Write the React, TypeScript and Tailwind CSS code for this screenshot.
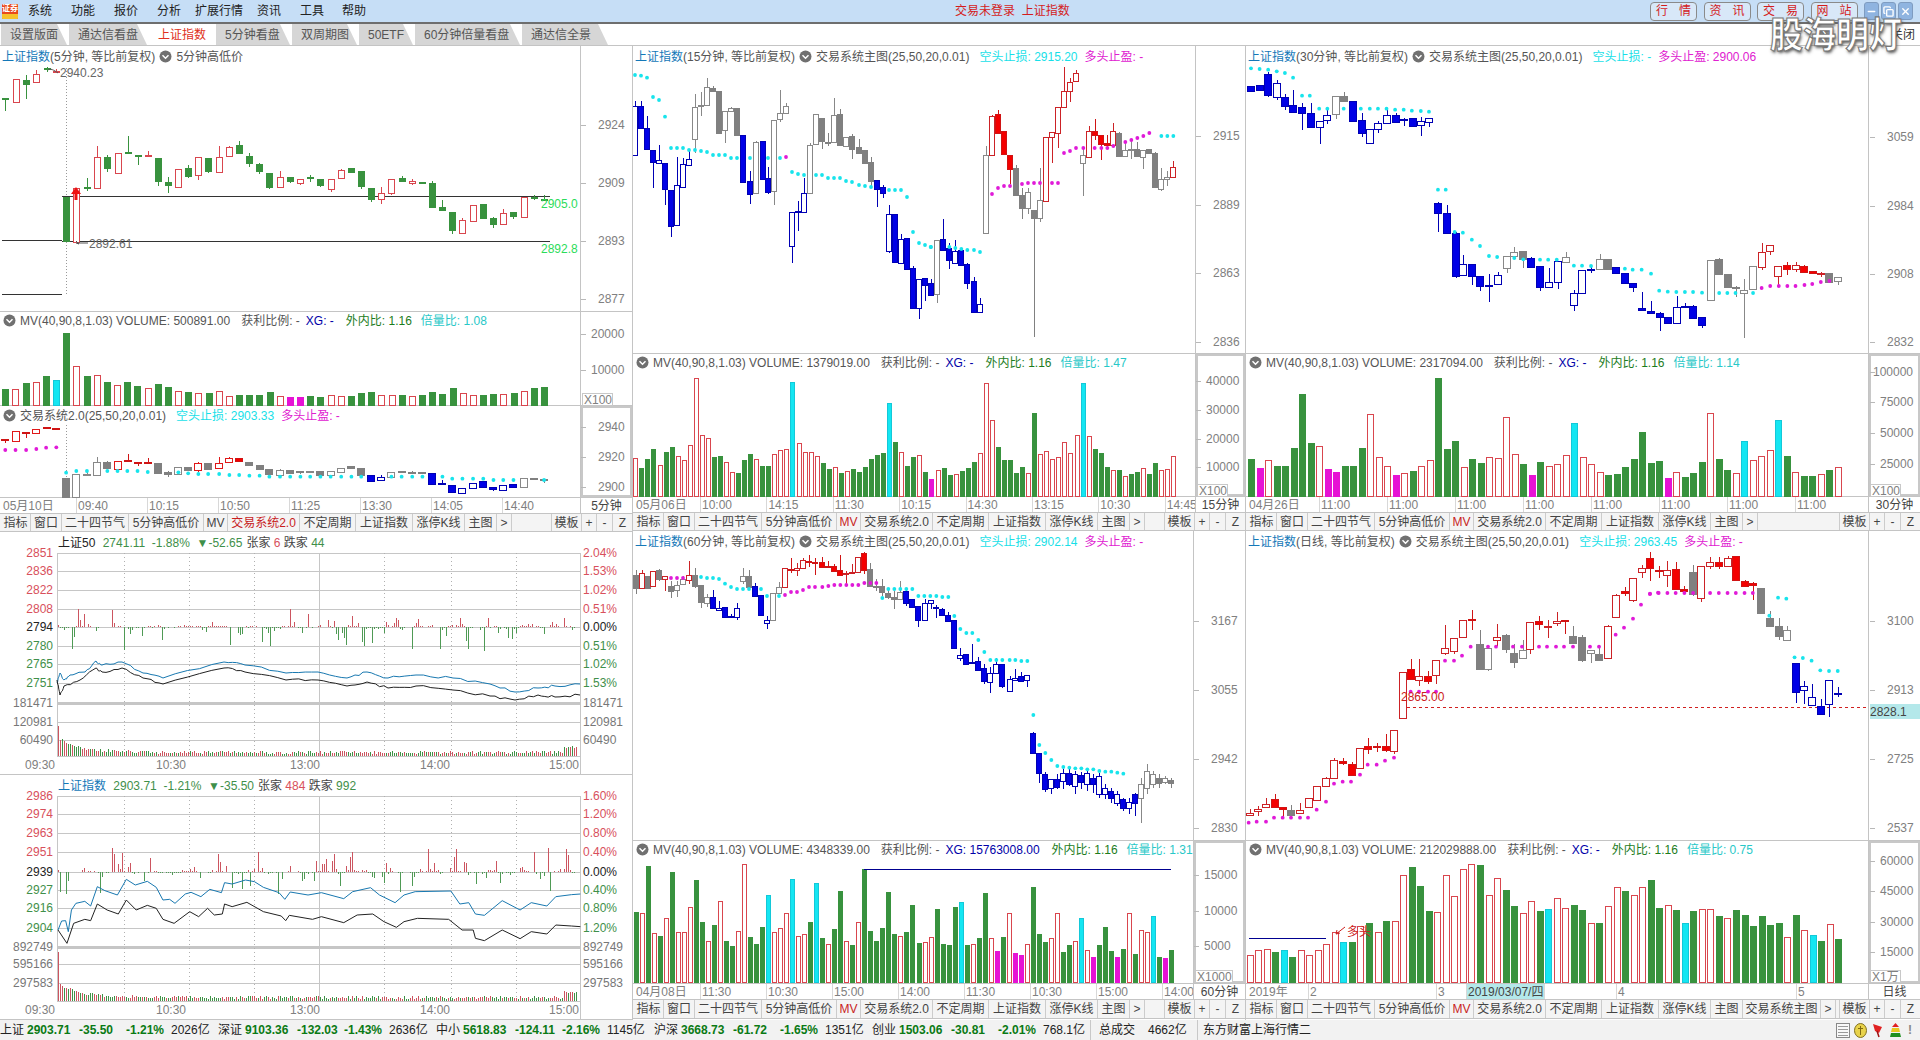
import React from "react";
import { Copy, Minus, X } from "lucide-react";

type Zoom = [number, number, number, number];

const Z1: Zoom = [0, 0, 2.45, 3];
const Z2: Zoom = [1280, 0, 2.45, 3];
const Z3: Zoom = [0, 340, 2.45, 3];
const Z5: Zoom = [600, 340, 2.376, 3];
const Z6: Zoom = [1200, 340, 2.178, 3];
const Z7: Zoom = [620, 820, 2.376, 3];
const Z8: Zoom = [1240, 820, 2.306, 3];
const Z9: Zoom = [633, 46, 3, 3];
const Z10: Zoom = [930, 46, 3, 3];
const Z11: Zoom = [633, 532, 3, 3];
const Z12: Zoom = [1246, 532, 3, 3];

// x top bottom [high low] kind
const C5M = `13 293 296 293 332 g;38 238 305 r;64 240 252 225 297 g;89 222 247 210 247 r;114 205 208 200 215 g;137 213 215 208 220 r;162 590 722 g;187 565 725 r;213 560 562 533 572 g;238 472 565 438 565 r;263 472 505 465 515 g;288 460 518 460 522 r;313 456 460 408 462 g;337 465 467 465 495 g;362 466 469 452 472 r;388 474 542 474 557 g;412 546 556 532 578 g;437 508 560 r;461 505 527 495 535 g;486 472 526 472 540 r;510 475 512 475 518 g;537 470 515 438 518 r;562 442 467 438 472 r;586 436 458 424 458 g;611 468 488 460 500 g;635 492 512 488 522 g;660 519 561 519 567 g;686 532 562 513 562 r;711 530 542 530 548 g;736 536 548 536 556 r;760 532 534 525 545 g;785 538 555 538 560 g;810 538 566 538 575 r;836 510 533 508 538 r;861 503 515 503 519 g;885 514 558 514 566 g;910 565 598 565 605 g;934 580 598 562 611 r;959 538 578 538 585 r;984 535 542 528 545 g;1010 543 548 538 554 r;1035 545 546 545 553 g;1059 549 621 544 623 g;1084 622 630 600 632 g;1108 636 689 636 701 g;1133 660 700 655 700 r;1159 614 662 614 664 r;1184 613 654 613 658 g;1209 655 671 650 684 g;1233 640 673 628 675 r;1258 637 648 635 656 g;1283 591 652 590 652 r;1309 590 591 585 600 g;1333 596 598 585 603 g`;

const C5S = `13 296 300 296 310 R;38 273 302 r;64 275 280 275 295 R;89 267 278 r;114 262 264 R;138 265 266 R;162 415 470 k;187 403 472 K;213 401 403 393 405 K;238 367 405 352 405 K;263 367 383 363 385 k;288 364 388 362 390 r;313 359 363 342 365 R;337 367 370 367 378 R;362 365 368 355 370 R;388 369 398 369 400 k;412 396 403 392 410 k;437 382 403 K;461 381 391 k;486 368 391 366 395 r;510 370 386 k;537 368 385 352 386 r;562 355 366 352 368 r;586 353 364 R;611 367 376 k;636 375 386 k;660 387 403 k;686 391 406 386 410 K;711 391 398 k;736 394 396 392 402 k;760 393 395 K;785 394 404 k;810 394 406 K;836 385 396 383 400 K;861 378 385 k;885 385 404 k;910 406 422 b;934 412 419 405 422 B;959 395 412 K;984 393 397 k;1010 396 398 393 402 k;1035 397 398 k;1059 400 431 b;1084 429 433 420 433 b;1108 435 457 b;1133 445 459 B;1159 428 444 B;1184 424 442 b;1209 441 448 441 452 b;1233 435 450 B;1258 432 440 b;1283 415 442 K;1309 415 418 k;1333 418 421 418 428 k`;

const C15A = `6 180 328 165 328 B;25 180 245 165 245 b;43 247 308 210 308 b;61 312 348 312 425 b;79 343 350 296 350 B;97 351 428 351 476 b;115 432 540 432 572 b;133 418 536 334 536 B;151 355 422 335 425 B;169 340 358 316 358 B;187 184 278 144 320 K;205 178 179 138 210 K;223 124 178 97 178 K;241 126 134 120 134 k;259 135 260 135 262 k;277 195 253 195 290 K;295 187 195 182 195 K;313 186 266 k;331 267 407 b;351 405 443 375 473 b;370 288 440 285 442 K;389 285 398 b;405 396 437 363 445 b;424 222 436 222 476 K;442 202 220 132 228 K;460 181 202 172 202 K;478 499 601 499 650 B;496 496 498 465 555 B;514 442 498 396 498 B;532 297 442 292 442 K;550 205 295 K;568 216 284 216 310 k;586 287 289 262 300 k;604 208 288 155 288 K;622 205 296 190 296 k;640 272 300 K;658 270 308 263 340 k;679 304 320 278 320 k;697 312 350 312 352 k;715 348 404 333 420 k;733 402 428 402 482 b;751 423 440 418 455 b;769 505 616 478 620 B;787 504 647 b;805 580 650 565 650 B;823 576 670 576 672 b;841 666 785 660 785 b;859 700 785 700 818 B;877 697 716 697 766 b;895 712 746 700 746 b`;

const C15B = `22 583 745 583 770 K;40 580 611 519 611 b;58 606 642 590 670 b;76 615 650 582 650 B;94 612 656 605 656 b;112 654 710 650 728 b;133 706 797 693 797 b;151 775 797 755 797 B;169 328 560 300 560 K;187 211 326 208 326 r;205 204 260 192 260 R;223 255 323 R;241 327 368 327 415 R;259 366 446 358 446 k;277 447 485 425 518 k;295 438 485 425 505 K;313 492 516 492 872 k;331 463 517 366 527 K;349 274 466 r;367 259 274 259 350 r;385 184 260 184 306 r;403 136 182 63 182 r;421 108 136 95 168 r;439 82 106 72 106 r;460 328 350 310 450 K;478 256 334 240 334 r;496 255 266 220 282 R;514 267 293 267 342 R;532 290 297 268 308 R;550 256 298 232 298 r;568 262 331 258 332 k;586 311 331 290 332 K;604 310 313 285 338 K;622 310 330 288 332 k;640 312 332 312 368 K;658 310 320 k;676 321 422 318 425 k;694 398 430 366 434 K;712 392 398 375 420 K;730 362 394 345 394 r`;

const C30 = `-71 257 272 b;-50 255 270 b;-29 222 285 215 290 b;-8 248 290 240 300 B;12 290 318 282 330 b;33 315 335 270 335 b;54 322 340 310 390 b;75 340 380 310 380 b;97 362 380 362 432 B;116 344 360 320 372 B;138 289 343 289 358 K;158 289 303 276 303 k;179 303 362 b;200 360 400 340 412 b;221 388 428 B;241 370 388 363 400 B;262 344 370 328 370 B;283 344 365 340 365 b;304 356 358 355 378 b;325 355 377 355 380 b;346 364 376 352 408 B;366 355 365 355 380 B;388 609 640 605 695 b;408 640 700 615 700 b;430 700 827 695 833 b;449 793 824 765 824 B;471 793 827 793 855 b;491 827 857 827 872 b;513 855 857 823 905 b;533 826 853 815 853 B;555 769 805 769 818 K;574 755 768 742 775 K;595 754 776 752 805 k;616 775 800 770 800 b;638 798 862 798 872 b;658 845 860 805 860 B;680 784 847 784 868 B;700 772 785 755 785 K;721 880 916 870 932 B;741 811 880 B;762 806 810 800 820 B;783 778 808 762 810 K;804 778 806 776 806 k;824 802 818 b;846 818 848 818 850 b;866 848 860 848 875 b;888 923 931 875 932 b;909 934 940 903 940 b;930 940 952 935 992 b;951 950 968 950 970 b;972 920 968 888 973 B;993 918 920 910 920 B;1013 918 953 916 953 b;1034 952 976 950 984 b;1055 781 901 K;1076 778 822 775 822 k;1097 821 862 k;1118 860 862 858 890 k;1138 869 880 838 1014 K;1159 799 868 K;1180 755 800 730 810 r;1201 736 754 736 765 r;1221 797 828 797 857 r;1242 796 807 785 825 R;1263 796 807 787 815 r;1284 799 815 795 818 R;1305 814 820 812 822 R;1325 818 822 816 832 r;1346 820 845 818 848 k;1367 832 844 832 855 K`;

const C60 = `9 133 170 118 188 k;27 127 170 118 170 r;44 135 170 k;61 120 166 r;79 118 144 115 150 k;97 136 143 136 180 r;115 166 179 150 200 k;133 161 178 150 198 K;151 145 160 135 160 K;169 133 146 90 160 r;187 133 164 110 170 k;205 163 214 163 230 k;223 199 215 190 228 K;241 198 231 177 235 b;259 230 238 210 240 B;277 228 257 228 258 b;295 254 257 250 260 b;313 232 257 216 266 B;331 136 150 110 160 K;349 136 167 118 167 k;367 165 194 156 194 b;385 193 251 b;403 268 277 255 293 B;421 187 268 K;439 169 185 153 185 K;457 112 169 r;475 115 118 82 125 R;493 112 117 95 135 r;511 88 112 80 115 r;529 89 94 72 108 R;547 93 96 80 132 R;568 94 108 78 110 R;586 105 108 90 110 R;604 106 119 100 122 R;622 118 131 72 131 R;640 125 130 120 165 r;658 123 124 100 125 r;676 79 123 r;694 67 116 64 130 R;712 115 164 97 164 k;730 164 167 145 180 k;748 166 184 145 195 k;766 186 199 170 205 k;784 199 205 180 233 k;802 182 204 150 204 K;820 180 215 172 225 b;838 205 227 205 228 b;856 226 268 226 287 b;875 217 268 205 268 B;893 208 217 208 233 B;910 228 232 222 262 b;928 235 251 230 252 b;946 251 269 242 269 b;964 268 350 b;982 371 380 352 390 B;1000 370 398 b;1018 392 397 340 398 b;1036 391 418 378 418 b;1054 412 450 400 460 b;1072 425 452 408 485 B;1090 398 425 380 430 B;1108 400 465 400 470 b;1130 445 481 435 481 B;1147 440 447 415 447 B;1165 436 449 423 449 b;1183 433 448 433 468 B;1201 606 665 602 665 b;1219 666 727 666 755 b;1237 729 773 722 782 b;1255 745 772 745 790 B;1273 745 768 730 775 b;1291 725 750 715 775 B;1309 725 760 712 765 b;1327 730 765 720 790 B;1345 732 752 722 775 b;1363 725 760 715 780 B;1381 742 758 730 785 b;1399 735 790 725 800 B;1417 770 790 760 805 B;1435 780 800 770 815 b;1453 790 815 780 825 B;1471 805 830 800 840 b;1489 812 830 800 850 B;1507 790 815 785 855 b;1525 760 800 740 875 K;1543 720 770 700 790 K;1561 730 760 720 770 K;1579 740 755 730 770 k;1597 742 752 735 760 K;1615 748 755 740 770 k`;

const CDA = `11 845 851 835 851 r;35 833 840 825 855 r;61 820 827 800 827 r;86 805 828 790 830 R;112 829 833 829 860 R;136 838 852 823 852 k;163 838 845 815 845 r;188 802 828 802 830 r;214 764 808 r;240 742 764 738 764 r;265 688 740 682 740 r;291 691 696 680 702 R;317 698 731 692 731 R;343 652 712 r;367 646 653 622 668 R;393 645 648 636 664 R;419 645 656 610 662 R;445 598 659 598 668 r;470 424 560 r;496 415 445 385 445 R;520 434 448 385 465 r;546 436 449 420 458 R;571 388 433 388 458 r;598 352 365 282 372 r;625 322 361 322 368 r;650 268 317 268 322 r;677 265 268 238 296 R;702 340 415 298 415 k;727 352 415 352 420 K;752 317 328 280 345 r;779 312 353 310 365 k;803 366 392 338 412 k;830 358 382 328 382 K;853 274 353 274 370 r;880 270 280 255 296 R;905 285 289 266 320 r;932 271 277 243 285 r;957 268 271 268 308 R;982 316 335 286 335 k;1009 318 386 312 392 k;1034 358 367 358 395 K;1060 369 388 342 388 k;1085 284 382 282 382 r;1111 193 259 188 259 r;1136 180 187 168 196 R;1162 142 206 142 212 r;1187 110 124 102 140 r;1213 82 112 64 150 R;1239 117 119 105 142 R`;

const CDB = `1018 692 708 665 745 r;1036 690 750 668 750 R;1055 750 755 740 765 R;1073 700 765 678 770 k;1092 680 778 680 788 r;1111 668 682 655 690 r;1130 670 682 655 690 R;1149 658 682 652 682 r;1167 652 722 650 725 R;1186 725 740 722 745 R;1204 733 737 730 782 R;1222 748 821 k;1241 838 862 815 862 k;1260 860 890 838 903 k;1278 872 902 860 902 K;1297 972 1060 972 1092 b;1315 1040 1052 1025 1095 B;1334 1075 1098 1036 1100 B;1352 1100 1125 1080 1128 b;1371 1023 1094 1023 1135 B;1390 1063 1065 1045 1075 B`;

const D15A_C = "6,87 24,89 42,95 60,153 78,162 96,212 114,306 132,306 150,306 168,312 186,312 204,315 222,318 240,327 258,327 276,327 294,336 312,336 351,336 405,336 441,336 477,378 495,384 513,387 549,387 567,387 585,396 603,396 621,396 639,405 657,408 678,417 696,420 714,423 768,432 786,432 804,432 822,453 840,558 858,591 876,597 894,603";
const D15B_C = "2,603 58,603 76,606 94,609 112,612 132,612 150,618 694,270 712,270 730,270";
const D15B_M = "186,444 204,426 222,420 240,420 276,414 294,411 312,411 330,411 366,411 384,411 402,321 420,315 438,306 460,306 494,306 514,306 532,306 550,300 586,288 604,282 622,276 640,270 658,261";
const D30_C = "-71,205 -50,207 -29,209 -8,214 12,219 32,233 54,287 73,287 96,326 116,326 156,326 198,326 220,326 240,326 261,326 282,329 303,329 323,332 345,333 365,335 387,569 406,569 428,696 448,698 470,719 490,738 512,768 532,771 574,774 596,778 637,779 657,779 678,779 720,797 740,797 762,798 845,806 864,809 886,809 909,821 929,872 950,875 971,876 992,876 1012,876 1034,878 1076,879 1096,879 1116,879 1159,879";
const D30_M = "1180,864 1201,858 1222,858 1243,858 1263,858 1285,855 1304,852 1325,846 1346,843";
const D5S_M = "13,330 38,330 64,330 89,327 113,323 138,322";
const D5S_C = "162,398 187,393 213,393 263,393 288,393 312,393 337,393 362,396 437,397 461,400 486,402 510,402 537,402 562,405 586,405 611,407 636,407 660,410 686,410 711,410 736,410 760,410 785,410 810,410 836,410 861,410 885,410 959,410 984,410 1010,410 1035,410 1084,410 1108,416 1133,416 1159,416 1184,416 1209,420 1233,420 1258,420 1333,420";
const D60_C = "204,138 222,141 240,141 258,144 276,158 294,168 312,174 330,174 348,174 384,174 402,195 438,195 748,201 766,174 784,174 802,174 820,174 838,174 856,195 874,195 892,195 910,195 928,198 946,198 964,255 982,294 1000,306 1018,306 1036,327 1054,363 1072,387 1090,387 1108,387 1130,387 1147,387 1165,390 1183,390 1201,552 1219,642 1237,666 1255,687 1273,705 1291,708 1309,710 1327,712 1345,712 1363,715 1381,715 1399,720 1417,722 1435,722 1453,725 1471,728";
const D60_M = "114,141 132,141 150,141 456,192 474,183 492,183 510,177 528,168 546,168 568,168 586,165 604,162 622,162 640,162 658,162 676,162 694,156 712,156 730,156";
const DDA_M = "8,875 32,872 60,872 84,860 110,860 135,860 162,860 186,860 212,836 240,812 264,758 290,752 315,752 342,731 365,701 392,701 417,689 444,680 494,482 519,482 546,482 570,482 597,389 624,389 648,374 674,347 726,347 750,347 801,347 828,347 879,347 903,347 930,347 954,347 981,347 1032,347 1059,347 1109,311 1134,290 1161,263 1185,221 1212,188 1236,185";
const DDB_M = "980,765 999,762 1018,762 1036,762 1055,762 1074,762 1111,762 1130,762 1149,762 1167,762 1186,762 1204,762";
const DDB_C = "1259,776 1277,779 1240,830 1295,955 1313,957 1332,965 1351,994 1370,996 1389,996";

const V5 = "148g 148r 130g 127r 108g 120c -22g 79r 108g 105r 126g 135r 126g 138g 145r 132g 141g 153r 155g 160r 158g 153r 168r 165g 165g 165g 156g 168r 170m 170m 168g 170g 165r 168r 168g 158g 156g 165r 165r 165g 168r 165g 156g 162g 144g 160r 165r 165g 162g 162r 160g 152r 145g 141g";
const V15 = "355r 385g 358g 328g 376r 336g 322g 349r 361r 316r 115r 286r 295r 351g 349g 367r 397r 400g 361g 342g 358r 378g 378g 343r 331r 328r 127c 310r 337r 337r 349r 369g 387g 382r 400g 394r 388g 396g 381g 358g 346g 340g 190c 306g 337r 378g 352g 346r 397g 418m 391r 384g 405g 403r 393g 384g 366g 340r 130r 241r 322g 360g 360g 400g 381g 400r 220g 343r 334r 358r 352r 307r 340r 284r 130c 289r 328g 340g 381g 391r 391g 409r 403g 397g 385r 403g 370g 391r 388r 349r";
const V30 = "357g 385m 361r 378g 378g 324g 162g 309g 319r 387m 396m 378g 378g 324g 223r 352r 379r 405m 399r 393g 379r 361r 114g 327g 303g 381r 357g 369g 352r 355r 232r 343r 372g 405m 366g 379r 372r 346r 250c 352r 373r 397r 405g 402g 381g 357g 276g 369g 363g 414m 397r 411g 399g 366g 220r 357g 390g 399r 303c 361r 349r 331r 241c 348g 397r 408g 408g 403r 390g 381r";
const V60 = "280g 283r 141g 343r 351g 297r 159g 340r 340r 265r 183g 310g 367r 318g 247r 366g 381g 337r 136r 354g 375g 324g 229c 340r 328r 283r 181c 352r 346r 309g 192c 357g 376r 330g 216g 367r 378g 310r 151g 336g 366g 327g 219g 345g 352r 339g 258g 372g 370r 355r 270g 375g 378g 264g 250c 378g 376r 357g 222g 358r 396m 354g 283r 402m 408m 376r 204g 345g 369g 358r 283r 399g 378g 367r 297c 394r 414m 378g 324g 396g 414m 390g 283r 405g 334r 340r 292c 414g 418m 393g";
const VD = "408r 394r 391r 399g 393c 413g 394r 408r 394r 376r 340r 369c 369g 322r 312g 340r 306g 307r 168r 144g 202g 276g 280r 168r 232r 151r 136r 138g 229r 178r 213g 261g 283r 246r 276g 270c 238r 268r 258g 273g 313r 312g 262r 205r 216g 229r 205r 183g 267g 258r 273g 312c 276g 270r 270r 290g 298r 273g 288g 321g 291g 318g 312g 355r 288g 334r 348c 366g 316r 360g";

const COLORS: Record<string, [string, string]> = {
	g: ["#38923e", "#38923e"],
	b: ["#0000e6", "#0000b4"],
	B: ["#ffffff", "#0000b4"],
	k: ["#808080", "#808080"],
	K: ["#ffffff", "#888888"],
	R: ["#f40000", "#d01414"],
};

const px = (t: Zoom, x: number) => t[0] + x / t[2];
const py = (t: Zoom, y: number) => t[1] + y / t[3];

const Candles = ({ raw, t, w, red = "#cc2226" }: { raw: string; t: Zoom; w: number; red?: string }) => (
	<g shapeRendering="crispEdges">
		{raw.split(";").map((item, i) => {
			const p = item.trim().split(" ");
			const kind = p[p.length - 1];
			const n = p.slice(0, -1).map(Number);
			const x = Math.round(px(t, n[0]));
			const top = Math.round(py(t, n[1]));
			const bottom = Math.round(py(t, n[2]));
			const high = Math.round(py(t, n.length > 3 ? n[3] : n[1]));
			const low = Math.round(py(t, n.length > 3 ? n[4] : n[2]));
			const [fill, stroke] = kind === "r" ? ["#ffffff", red] : COLORS[kind];
			return (
				<g key={i}>
					<line x1={x + 0.5} x2={x + 0.5} y1={high} y2={low} stroke={stroke} />
					<rect x={x - Math.floor(w / 2) + 0.5} y={top + 0.5} width={w - 1} height={Math.max(bottom - top, 1)} fill={fill} stroke={stroke} />
				</g>
			);
		})}
	</g>
);

const Dots = ({ raw, t, fill, r = 1.9 }: { raw: string; t: Zoom; fill: string; r?: number }) => (
	<g fill={fill}>
		{raw.split(" ").map((item, i) => {
			const [x, y] = item.split(",").map(Number);
			return <circle key={i} cx={px(t, x)} cy={py(t, y)} r={r} />;
		})}
	</g>
);

const VolBars = ({ raw, t, x0, x1, base, w }: { raw: string; t: Zoom; x0: number; x1: number; base: number; w: number }) => {
	const items = raw.split(" ");
	const bottom = Math.round(py(t, base));
	return (
		<g shapeRendering="crispEdges">
			{items.map((item, i) => {
				const kind = item[item.length - 1];
				const top = Math.round(py(t, parseInt(item)));
				const x = Math.round(px(t, x0 + (i * (x1 - x0)) / (items.length - 1)));
				const fill = { g: "#38923e", r: "#ffffff", c: "#14e6f2", m: "#e612d4" }[kind];
				const stroke = { g: "#38923e", r: "#d9464e", c: "#14c8d8", m: "#e612d4" }[kind];
				return <rect key={i} x={x - Math.floor(w / 2) + 0.5} y={top + 0.5} width={w - 1} height={bottom - top - 1} fill={fill} stroke={stroke} />;
			})}
		</g>
	);
};

const AxisText = ({ x, tick, items }: { x: number; tick: number; items: [number, string][] }) => (
	<g fontSize="12" fill="#808080">
		{items.map(([y, label]) => (
			<g key={label}>
				<line x1={tick} x2={tick + 5} y1={y + 0.5} y2={y + 0.5} stroke="#b8b8b8" />
				<text x={x} y={y + 4}>{label}</text>
			</g>
		))}
	</g>
);

const UnitBox = ({ x, y, label }: { x: number; y: number; label: string }) => (
	<g>
		<rect x={x + 0.5} y={y + 0.5} width={label === "X1000" ? 37 : 30} height={12} fill="#ffffff" stroke="#c8c8c8" />
		<text x={x + 2} y={y + 11} fontSize="12" fill="#808080">{label}</text>
	</g>
);

const Badge = ({ first = false }: { first?: boolean }) => (
	<svg width="13" height="13" viewBox="0 0 13 13" className={first ? "ml-[1px] mr-[4px] shrink-0" : "mx-[4px] shrink-0"}>
		<circle cx="6.5" cy="6.5" r="6" fill="#707070" />
		<path d="M3.5 5.2 6.5 8.2 9.5 5.2" fill="none" stroke="#ffffff" strokeWidth="1.5" />
	</svg>
);

const MainTitle = ({ period, indicator }: { period: string; indicator: React.ReactNode }) => (
	<>
		<span className="text-[#1478b8]">上证指数</span>
		<span className="text-[#555]">({period}, 等比前复权)</span>
		<Badge />
		{indicator}
	</>
);

const SystemTitle = ({ name, short, long }: { name: string; short: string; long: string }) => (
	<>
		<span className="text-[#555]">{name}(25,50,20,0.01)</span>
		<span className="ml-[10px] text-[#18dfe8]">空头止损: {short}</span>
		<span className="ml-[7px] text-[#e020d0]">多头止盈: {long}</span>
	</>
);

const VolumeTitle = ({ volume, xg, ratio }: { volume: string; xg: string; ratio: string }) => (
	<>
		<Badge first />
		<span className="text-[#555]">MV(40,90,8,1.03) VOLUME: {volume}</span>
		<span className="ml-[11px] text-[#555]">获利比例: -</span>
		<span className="ml-[6px] text-[#0000a8]">XG: {xg}</span>
		<span className="ml-[12px] text-[#1c7c1c]">外内比: 1.16</span>
		<span className="ml-[9px] text-[#28c8c8]">倍量比: {ratio}</span>
	</>
);

const Pane = ({
	box,
	heightClass,
	plotClass,
	axisClass = "",
	titleClass = "top-[2px]",
	title,
	children,
}: {
	box: [number, number, number, number];
	heightClass: string;
	plotClass: string;
	axisClass?: string;
	titleClass?: string;
	title?: React.ReactNode;
	children?: React.ReactNode;
}) => (
	<div className={`relative flex shrink-0 border-b border-[#c4c4c4] ${heightClass}`}>
		<div className={`h-full border-r border-[#c4c4c4] ${plotClass}`} />
		<div className={`h-full flex-1 ${axisClass}`} />
		<svg className="absolute left-0 top-0" width={box[2]} height={box[3]} viewBox={box.join(" ")}>
			{children}
		</svg>
		{title && <div className={`absolute left-[2px] flex h-[17px] items-center whitespace-nowrap ${titleClass}`}>{title}</div>}
	</div>
);

const AxisRow = ({
	plotClass,
	unit,
	items,
}: {
	plotClass: string;
	unit: string;
	items: { label: string; w: string; active?: boolean }[];
}) => (
	<div className="flex h-[16px] shrink-0 border-b border-[#c4c4c4] leading-[16px]">
		<div className={`flex overflow-hidden border-r border-[#c4c4c4] text-[#808080] ${plotClass}`}>
			{items.map((item, i) => (
				<span
					key={i}
					className={`shrink-0 whitespace-nowrap pl-[1px] ${item.w} ${i > 0 ? "border-l border-[#d8d8d8]" : "pl-[3px]"} ${item.active ? "bg-[#b4e8ea] text-[#444]" : ""}`}
				>
					{item.label}
				</span>
			))}
		</div>
		<div className="flex-1 text-center text-[#444]">{unit}</div>
	</div>
);

const TOOLS: [string, string][] = [
	["指标", "w-[30px]"],
	["窗口", "w-[31px]"],
	["二十四节气", "w-[67px]"],
	["5分钟高低价", "w-[75px]"],
	["MV", "w-[24px]"],
	["交易系统2.0", "w-[72px]"],
	["不定周期", "w-[56px]"],
	["上证指数", "w-[57px]"],
	["涨停K线", "w-[52px]"],
	["主图", "w-[32px]"],
];

const Toolbar = ({ active = "MV", heightClass = "h-[18px]", extra = false }: { active?: string; heightClass?: string; extra?: boolean }) => (
	<div className={`flex shrink-0 items-stretch border-b border-[#c4c4c4] bg-[#f4f4f4] pl-[1px] text-[#444] ${heightClass}`}>
		{TOOLS.map(([label, w]) => (
			<span key={label} className={`flex items-center justify-center whitespace-nowrap border-r border-[#cccccc] ${w} ${label === active ? "text-[#c81e1e]" : ""}`}>
				{label}
			</span>
		))}
		{extra && <span className="flex w-[78px] items-center justify-center whitespace-nowrap border-r border-[#cccccc]">交易系统主图</span>}
		<span className="flex w-[15px] items-center justify-center border-r border-[#cccccc]">&gt;</span>
		<span className="ml-auto flex w-[31px] items-center justify-center border-x border-[#cccccc]">模板</span>
		<span className="flex w-[15px] items-center justify-center border-r border-[#cccccc]">+</span>
		<span className="flex w-[16px] items-center justify-center border-r border-[#cccccc]">-</span>
		<span className="flex w-[19px] items-center justify-center">Z</span>
	</div>
);

const rnd = (i: number) => {
	const s = Math.sin(i * 12.9898) * 43758.5453;
	return s - Math.floor(s);
};

const wobble = (pts: number[][], amount: number) => {
	const out: string[] = [];
	pts.forEach((p, i) => {
		out.push(`${p[0]},${p[1]}`);
		const next = pts[i + 1];
		if (!next || amount === 0) return;
		for (let k = 1; k < 5; k++) {
			const x = p[0] + ((next[0] - p[0]) * k) / 5;
			const y = p[1] + ((next[1] - p[1]) * k) / 5 + (rnd(i * 7 + k) - 0.5) * amount;
			out.push(`${x},${y}`);
		}
	});
	return out.join(" ");
};

const Intraday = ({
	top,
	height,
	title,
	grid,
	left,
	right,
	blue,
	black,
	zero,
	up,
	down,
	firstBar,
	seed,
	amount,
}: {
	top: number;
	height: number;
	title: React.ReactNode;
	grid: number[];
	left: string[];
	right: string[];
	blue: number[][];
	black: number[][];
	zero: number;
	up: number;
	down: number;
	firstBar: number;
	seed: number;
	amount: number;
}) => {
	const base = top + height - 19;
	const redBars: string[] = [];
	const greenBars: string[] = [];
	const redVol: string[] = [];
	const greenVol: string[] = [];
	for (let i = 0; i < 260; i++) {
		const x = 58.5 + i * 2;
		const r = rnd(i + seed);
		const side = Math.sin(i * 0.37 + seed) + Math.sin(i * 0.11 + seed * 2) * 0.6 + (rnd(i * 3 + seed) - 0.5);
		const spike = r * r * r * r * r;
		if (rnd(i * 2 + seed * 5) > 0.3) {
			if (side > 0) redBars.push(`M${x} ${zero}V${zero - 1 - up * spike}`);
			else greenBars.push(`M${x} ${zero}V${zero + 1 + down * spike}`);
		}
		const h = i === 0 ? firstBar : 2 + 14 * Math.exp(-i / 12) + rnd(i * 5 + seed) * 3 + (i > 252 ? 5 : 0);
		(rnd(i * 11 + seed) > 0.5 ? redVol : greenVol).push(`M${x} ${base}V${base - h}`);
	}
	return (
		<div className="relative shrink-0 border-b border-[#c4c4c4]" style={{ height }}>
			<svg className="absolute left-0 top-0" width="632" height={height} viewBox={`0 ${top} 632 ${height}`}>
				<g stroke="#c6c6c6" shapeRendering="crispEdges">
					{grid.map((y, i) => (
						<line key={y} x1="57" x2="580" y1={y + 0.5} y2={y + 0.5} strokeWidth={i === 8 ? 3 : 1} />
					))}
					<line x1="57" x2="580" y1={base + 0.5} y2={base + 0.5} />
					<line x1="57.5" x2="57.5" y1={grid[0]} y2={base} />
					<line x1="319.5" x2="319.5" y1={grid[0]} y2={base} />
					<line x1="580.5" x2="580.5" y1={grid[0]} y2={top + height} />
					{[124, 189, 254, 384, 451, 516].map((x) => (
						<line key={x} x1={x + 0.5} x2={x + 0.5} y1={grid[0]} y2={base} strokeDasharray="1 3" stroke="#b0b0b0" />
					))}
				</g>
				<g strokeWidth="1" shapeRendering="crispEdges">
					<path d={redBars.join("")} stroke="#cc5560" />
					<path d={greenBars.join("")} stroke="#4f9a55" />
					<path d={redVol.join("")} stroke="#cc5560" />
					<path d={greenVol.join("")} stroke="#3f9247" />
				</g>
				<polyline points={wobble(blue, amount)} fill="none" stroke="#1878b0" strokeWidth="1" />
				<polyline points={wobble(black, amount)} fill="none" stroke="#222222" strokeWidth="1" />
				<g fontSize="12">
					{left.map((label, i) => (
						<text key={i} x="53" y={grid[i] + 4} textAnchor="end" fill={i < 4 ? "#d8505c" : i === 4 ? "#222222" : i < 8 ? "#3f8f4a" : "#777777"}>
							{label}
						</text>
					))}
					{right.map((label, i) => (
						<text key={i} x="583" y={grid[i] + 4} fill={i < 4 ? "#d8505c" : i === 4 ? "#222222" : i < 8 ? "#3f8f4a" : "#777777"}>
							{label}
						</text>
					))}
					{[
						[25, "09:30"],
						[156, "10:30"],
						[290, "13:00"],
						[420, "14:00"],
						[549, "15:00"],
					].map(([x, label]) => (
						<text key={label} x={x} y={base + 13} fill="#808080">
							{label}
						</text>
					))}
				</g>
			</svg>
			<div className="absolute left-[58px] top-[2px] flex h-[17px] items-center gap-[4px] whitespace-nowrap">{title}</div>
		</div>
	);
};

const STATS = [
	["上证", "2903.71", "-35.50", "-1.21%", "2026亿"],
	["深证", "9103.36", "-132.03", "-1.43%", "2636亿"],
	["中小", "5618.83", "-124.11", "-2.16%", "1145亿"],
	["沪深", "3668.73", "-61.72", "-1.65%", "1351亿"],
	["创业", "1503.06", "-30.81", "-2.01%", "768.1亿"],
];

const StatusBar = () => (
	<div className="flex h-[20px] shrink-0 items-center whitespace-nowrap bg-[#f2f2f2] text-[#222]">
		{STATS.map(([name, price, change, pct, amount]) => (
			<div key={name} className="flex w-[218px] shrink-0 last:w-[219px]">
				<span className="w-[27px]">{name}</span>
				<span className="w-[52px] font-bold text-[#0a7a14]">{price}</span>
				<span className="w-[47px] font-bold text-[#0a7a14]">{change}</span>
				<span className="w-[45px] font-bold text-[#0a7a14]">{pct}</span>
				<span>{amount}</span>
			</div>
		))}
		<div className="flex h-full w-[108px] shrink-0 items-center border-x border-[#c8c8c8] pl-[8px]">
			<span className="w-[49px]">总成交</span>
			<span>4662亿</span>
		</div>
		<span className="ml-[5px]">东方财富上海行情二</span>
		<div className="ml-auto mr-[6px] flex items-center gap-[4px]">
			<svg width="14" height="15" viewBox="0 0 14 15">
				<rect x="0.5" y="0.5" width="13" height="14" fill="#f8f8f8" stroke="#888888" />
				<path d="M2 3.5H12M2 6.5H12M2 9.5H12M2 12.5H12" stroke="#999999" />
			</svg>
			<svg width="13" height="15" viewBox="0 0 13 15">
				<ellipse cx="6.5" cy="7.5" rx="6" ry="7" fill="#e8d24a" stroke="#807020" />
				<path d="M6.5 3V12M4 5.5H9" stroke="#806a10" />
			</svg>
			<svg width="14" height="15" viewBox="0 0 14 15">
				<path d="M2 1 11 4 8 10 4 8Z" fill="#e02020" />
				<path d="M6 8 8 14" stroke="#a01010" strokeWidth="1.5" />
			</svg>
			<svg width="13" height="15" viewBox="0 0 13 15">
				<path d="M6.5 0 10 4H3Z" fill="#e02020" />
				<path d="M3 5H10L11 9H2Z" fill="#e8c820" />
				<path d="M2 10H11L12 14H1Z" fill="#209020" />
			</svg>
			<span className="w-[8px] text-center font-bold text-[#888]">!</span>
		</div>
	</div>
);

const MENUS: [string, string][] = [
	["系统", "w-[43px]"],
	["功能", "w-[43px]"],
	["报价", "w-[43px]"],
	["分析", "w-[38px]"],
	["扩展行情", "w-[62px]"],
	["资讯", "w-[43px]"],
	["工具", "w-[42px]"],
	["帮助", "w-[43px]"],
];

const TABS: [string, string][] = [
	["设置版面", "w-[66px]"],
	["通达信看盘", "w-[78px]"],
	["上证指数", "w-[65px]"],
	["5分钟看盘", "w-[74px]"],
	["双周期图", "w-[65px]"],
	["50ETF", "w-[54px]"],
	["60分钟倍量看盘", "w-[105px]"],
	["通达信全景", "w-[86px]"],
];

const TopBar = () => (
	<div className="flex h-[24px] shrink-0 items-center border-b-2 border-[#6e6e6e] bg-[#c6def6] text-[#222]">
		<div className="ml-[2px] flex h-[15px] w-[16px] flex-col items-center overflow-hidden rounded-[1px] bg-[#e84a1c]">
			<span className="h-[10px] text-[8px] font-bold leading-[10px] text-white">证券</span>
			<div className="h-[5px] w-full bg-[#f6c22c]" />
		</div>
		<div className="ml-[10px] flex">
			{MENUS.map(([label, w]) => (
				<span key={label} className={w}>
					{label}
				</span>
			))}
		</div>
		<span className="ml-[570px] text-[#d41c1c]">交易未登录 &nbsp;上证指数</span>
		<div className="ml-auto flex items-center">
			{["行情", "资讯", "交易", "网站"].map((label) => (
				<span
					key={label}
					className="mr-[6.5px] flex h-[19px] w-[47px] justify-between rounded-[4px] border border-[#8a8a8a] bg-[#d8e8f8] px-[5px] leading-[17px] text-[#d41c1c]"
				>
					<span>{label[0]}</span>
					<span>{label[1]}</span>
				</span>
			))}
			<div className="mr-[7px] flex gap-[2px]">
				{[Minus, Copy, X].map((Icon, i) => (
					<span key={i} className="flex h-[18px] w-[15px] items-center justify-center rounded-[3px] border border-[#7f9cc0] bg-[#8fb4e0] text-white">
						<Icon size={11} strokeWidth={3} />
					</span>
				))}
			</div>
		</div>
	</div>
);

const TabBar = () => (
	<div className="flex h-[22px] shrink-0 items-end border-b border-[#c4c4c4] pl-[1px]">
		{TABS.map(([label, w], i) => (
			<span
				key={label}
				className={`mr-[2px] flex h-[21px] items-center whitespace-nowrap pl-[9px] [clip-path:polygon(0_0,calc(100%_-_10px)_0,100%_100%,0_100%)] ${w} ${i === 2 ? "bg-white text-[#e03020]" : "bg-[#d6d6d6] text-[#555]"}`}
			>
				{label}
			</span>
		))}
		<span className="ml-auto mr-[5px] self-center text-[#333]">关闭</span>
	</div>
);

const Column1 = () => (
	<div className="flex w-[633px] shrink-0 flex-col border-r border-[#c4c4c4]">
		<Pane box={[0, 46, 632, 266]} heightClass="h-[266px]" plotClass="w-[581px]" title={<MainTitle period="5分钟" indicator={<span className="text-[#555]">5分钟高低价</span>} />}>
			<line x1="66.5" x2="66.5" y1="68" y2="296" stroke="#999999" strokeDasharray="1 2" shapeRendering="crispEdges" />
			<g stroke="#333333" shapeRendering="crispEdges">
				<line x1="62" x2="550" y1="196.5" y2="196.5" />
				<line x1="62" x2="550" y1="241.5" y2="241.5" />
				<line x1="2" x2="62" y1="240.5" y2="240.5" />
				<line x1="2" x2="62" y1="294.5" y2="294.5" />
			</g>
			<Candles raw={C5M} t={Z1} w={7} red="#d9464e" />
			<path d="M76 187 71 194H74.5V200H77.5V194H81Z" fill="#ee1111" />
			<path d="M48 70C50 68 54 70 58 73M76 241 79 244 76 243M78 243H88" fill="none" stroke="#555555" />
			<text x="60" y="77" fontSize="12" fill="#666666">2940.23</text>
			<text x="89" y="248" fontSize="12" fill="#666666">2892.61</text>
			<text x="541" y="208" fontSize="12" fill="#2cdc5a">2905.0</text>
			<text x="541" y="253" fontSize="12" fill="#2cdc5a">2892.8</text>
			<AxisText x={598} tick={581} items={[[125, "2924"], [183, "2909"], [241, "2893"], [299, "2877"]]} />
		</Pane>
		<Pane box={[0, 312, 632, 94]} heightClass="h-[94px]" plotClass="w-[581px]" titleClass="top-[0px]" title={<VolumeTitle volume="500891.00" xg="-" ratio="1.08" />}>
			<VolBars raw={V5} t={Z3} x0={13} x1={1333} base={198} w={7} />
			<AxisText x={591} tick={581} items={[[334, "20000"], [370, "10000"]]} />
			<UnitBox x={582} y={393} label="X100" />
		</Pane>
		<Pane box={[0, 406, 632, 92]} heightClass="h-[92px]" plotClass="w-[581px]" axisClass="border-2 border-[#c8c8c8]" titleClass="top-[1px]" title={<><Badge first /><SystemTitle name="交易系统2.0" short="2903.33" long="-" /></>}>
			<line x1="66.5" x2="66.5" y1="425" y2="498" stroke="#999999" strokeDasharray="1 2" shapeRendering="crispEdges" />
			<Candles raw={C5S} t={Z3} w={8} red="#e01818" />
			<Dots raw={D5S_M} t={Z3} fill="#e01ad8" />
			<Dots raw={D5S_C} t={Z3} fill="#18e4ec" />
			<AxisText x={598} tick={581} items={[[427, "2940"], [457, "2920"], [487, "2900"]]} />
		</Pane>
		<AxisRow
			plotClass="w-[581px]"
			unit="5分钟"
			items={[
				{ label: "05月10日", w: "w-[76px]" },
				{ label: "09:40", w: "w-[71px]" },
				{ label: "10:15", w: "w-[71px]" },
				{ label: "10:50", w: "w-[71px]" },
				{ label: "11:25", w: "w-[71px]" },
				{ label: "13:30", w: "w-[71px]" },
				{ label: "14:05", w: "w-[71px]" },
				{ label: "14:40", w: "w-[71px]" },
			]}
		/>
		<Toolbar active="交易系统2.0" />
		<Intraday
			top={532}
			height={243}
			title={
				<>
					<span className="text-[#222]">上证50</span>
					<span className="text-[#3f8f4a]">&nbsp;2741.11 &nbsp;-1.88% &nbsp;▼-52.65</span>
					<span className="text-[#444]">张家 <span className="text-[#d8505c]">6</span> 跌家 <span className="text-[#3f8f4a]">44</span></span>
				</>
			}
			grid={[553, 571, 590, 609, 627, 646, 664, 683, 703, 722, 740]}
			left={["2851", "2836", "2822", "2808", "2794", "2780", "2765", "2751", "181471", "120981", "60490"]}
			right={["2.04%", "1.53%", "1.02%", "0.51%", "0.00%", "0.51%", "1.02%", "1.53%", "181471", "120981", "60490"]}
			blue={[[57, 683], [60, 673], [64, 680], [70, 675], [85, 672], [96, 661], [102, 665], [122, 662], [143, 673], [163, 678], [224, 662], [245, 665], [286, 673], [318, 672], [347, 678], [367, 672], [388, 678], [416, 675], [453, 678], [490, 684], [515, 692], [538, 688], [555, 686], [580, 684]]}
			black={[[57, 680], [60, 695], [64, 686], [80, 680], [96, 668], [102, 672], [122, 668], [143, 678], [163, 684], [224, 668], [245, 672], [286, 680], [318, 680], [347, 686], [367, 682], [388, 688], [416, 686], [453, 690], [490, 696], [515, 700], [538, 695], [555, 697], [580, 695]]}
			zero={627}
			up={17}
			down={24}
			firstBar={30}
			seed={3}
			amount={2.5}
		/>
		<Intraday
			top={775}
			height={245}
			title={
				<>
					<span className="text-[#1478b8]">上证指数</span>
					<span className="text-[#3f8f4a]">&nbsp;2903.71 &nbsp;-1.21% &nbsp;▼-35.50</span>
					<span className="text-[#444]">张家 <span className="text-[#d8505c]">484</span> 跌家 <span className="text-[#3f8f4a]">992</span></span>
				</>
			}
			grid={[796, 814, 833, 852, 872, 890, 908, 928, 947, 964, 983]}
			left={["2986", "2974", "2963", "2951", "2939", "2927", "2916", "2904", "892749", "595166", "297583"]}
			right={["1.60%", "1.20%", "0.80%", "0.40%", "0.00%", "0.40%", "0.80%", "1.20%", "892749", "595166", "297583"]}
			blue={[[130, 510], [138, 483], [147, 482], [153, 515], [160, 450], [170, 430], [190, 424], [203, 438], [218, 380], [235, 392], [263, 405], [283, 358], [303, 375], [330, 364], [350, 382], [365, 420], [380, 418], [392, 430], [415, 402], [428, 397], [450, 410], [470, 388], [496, 398], [503, 368], [520, 372], [550, 360], [570, 365], [590, 382], [625, 398], [638, 418], [650, 396], [690, 405], [720, 398], [770, 416], [790, 395], [830, 383], [850, 405], [885, 428], [905, 405], [930, 395], [1010, 393], [1030, 432], [1050, 428], [1065, 462], [1085, 466], [1125, 422], [1165, 450], [1190, 428], [1225, 438], [1245, 410], [1280, 404], [1300, 402]].map(([x, y]) => [x / 2.24, 760 + y / 3])}
			black={[[130, 510], [150, 550], [165, 490], [190, 478], [203, 482], [218, 432], [240, 450], [265, 462], [283, 420], [305, 450], [330, 436], [350, 445], [365, 478], [390, 490], [425, 455], [445, 470], [465, 445], [480, 465], [498, 462], [503, 432], [520, 440], [553, 427], [590, 455], [630, 468], [640, 482], [648, 466], [700, 478], [720, 470], [770, 488], [800, 465], [835, 462], [860, 485], [888, 502], [905, 485], [935, 475], [1005, 478], [1035, 510], [1060, 510], [1065, 535], [1085, 542], [1125, 510], [1165, 536], [1190, 515], [1225, 522], [1245, 495], [1280, 498], [1300, 500]].map(([x, y]) => [x / 2.24, 760 + y / 3])}
			zero={872}
			up={25}
			down={22}
			firstBar={49}
			seed={9}
			amount={0}
		/>
	</div>
);

const Column2 = () => (
	<div className="flex w-[613px] shrink-0 flex-col border-r border-[#c4c4c4]">
		<Pane box={[633, 46, 612, 308]} heightClass="h-[308px]" plotClass="w-[563px]" title={<MainTitle period="15分钟" indicator={<SystemTitle name="交易系统主图" short="2915.20" long="-" />} />}>
			<Candles raw={C15A} t={Z9} w={6} />
			<Candles raw={C15B} t={Z10} w={6} />
			<Dots raw={D15A_C} t={Z9} fill="#18e4ec" />
			<Dots raw="459,333" t={Z9} fill="#e01ad8" />
			<Dots raw={D15B_C} t={Z10} fill="#18e4ec" />
			<Dots raw={D15B_M} t={Z10} fill="#e01ad8" />
			<AxisText x={1213} tick={1196} items={[[136, "2915"], [205, "2889"], [273, "2863"], [342, "2836"]]} />
		</Pane>
		<Pane box={[633, 354, 612, 143]} heightClass="h-[143px]" plotClass="w-[563px]" axisClass="border-2 border-[#c8c8c8]" titleClass="top-[0px]" title={<VolumeTitle volume="1379019.00" xg="-" ratio="1.47" />}>
			<VolBars raw={V15} t={Z5} x0={84} x1={1362} base={470} w={5} />
			<AxisText x={1206} tick={1196} items={[[381, "40000"], [410, "30000"], [439, "20000"], [467, "10000"]]} />
			<UnitBox x={1197} y={484} label="X100" />
		</Pane>
		<AxisRow
			plotClass="w-[563px]"
			unit="15分钟"
			items={["05月06日", "10:00", "14:15", "11:30", "10:15", "14:30", "13:15", "10:30", "14:45"].map((label, i) => ({ label, w: i === 0 ? "w-[67px]" : "w-[66.4px]" }))}
		/>
		<Toolbar />
		<Pane box={[633, 532, 612, 310]} heightClass="h-[310px]" plotClass="w-[561px]" title={<MainTitle period="60分钟" indicator={<SystemTitle name="交易系统主图" short="2902.14" long="-" />} />}>
			<Candles raw={C60} t={Z11} w={6} />
			<Dots raw={D60_C} t={Z11} fill="#18e4ec" />
			<Dots raw={D60_M} t={Z11} fill="#e01ad8" />
			<AxisText x={1211} tick={1194} items={[[622, "3167"], [691, "3055"], [760, "2942"], [829, "2830"]]} />
		</Pane>
		<Pane box={[633, 842, 612, 143]} heightClass="h-[143px]" plotClass="w-[561px]" axisClass="border-2 border-[#c8c8c8]" titleClass="top-[0px]" title={<VolumeTitle volume="4348339.00" xg="15763008.00" ratio="1.31" />}>
			<VolBars raw={V60} t={Z7} x0={37} x1={1310} base={492} w={5} />
			<line x1={864} x2={1171} y1="870.5" y2="870.5" stroke="#000090" shapeRendering="crispEdges" />
			<AxisText x={1204} tick={1194} items={[[876, "15000"], [912, "10000"], [947, "5000"]]} />
			<UnitBox x={1195} y={971} label="X1000" />
		</Pane>
		<AxisRow
			plotClass="w-[561px]"
			unit="60分钟"
			items={["04月08日", "11:30", "10:30", "15:00", "14:00", "11:30", "10:30", "15:00", "14:00"].map((label, i) => ({ label, w: i === 0 ? "w-[67px]" : "w-[66px]" }))}
		/>
		<Toolbar heightClass="h-[19px]" />
	</div>
);

const Column3 = () => (
	<div className="flex flex-1 flex-col">
		<Pane box={[1246, 46, 674, 308]} heightClass="h-[308px]" plotClass="w-[623px]" title={<MainTitle period="30分钟" indicator={<SystemTitle name="交易系统主图" short="-" long="2900.06" />} />}>
			<Candles raw={C30} t={Z2} w={8} />
			<Dots raw={D30_C} t={Z2} fill="#18e4ec" />
			<Dots raw={D30_M} t={Z2} fill="#e01ad8" />
			<AxisText x={1887} tick={1870} items={[[137, "3059"], [206, "2984"], [274, "2908"], [342, "2832"]]} />
		</Pane>
		<Pane box={[1246, 354, 674, 143]} heightClass="h-[143px]" plotClass="w-[623px]" axisClass="border-2 border-[#c8c8c8]" titleClass="top-[0px]" title={<VolumeTitle volume="2317094.00" xg="-" ratio="1.14" />}>
			<VolBars raw={V30} t={Z6} x0={112} x1={1389} base={470} w={7} />
			<AxisText x={1873} tick={1870} items={[[372, "100000"]]} />
			<AxisText x={1880} tick={1870} items={[[402, "75000"], [433, "50000"], [464, "25000"]]} />
			<UnitBox x={1870} y={484} label="X100" />
		</Pane>
		<AxisRow
			plotClass="w-[623px]"
			unit="30分钟"
			items={["04月26日", "11:00", "11:00", "11:00", "11:00", "11:00", "11:00", "11:00", "11:00"].map((label, i) => ({ label, w: i === 0 ? "w-[73px]" : "w-[68px]" }))}
		/>
		<Toolbar />
		<Pane box={[1246, 532, 674, 310]} heightClass="h-[310px]" plotClass="w-[623px]" title={<MainTitle period="日线" indicator={<SystemTitle name="交易系统主图" short="2963.45" long="-" />} />}>
			<line x1="1401" x2="1869" y1="708.5" y2="708.5" stroke="#d02020" strokeDasharray="3 3" shapeRendering="crispEdges" />
			<Candles raw={CDA} t={Z12} w={8} />
			<Candles raw={CDB} t={Z6} w={8} />
			<Dots raw={DDA_M} t={Z12} fill="#e01ad8" />
			<Dots raw={DDB_M} t={Z6} fill="#e01ad8" />
			<Dots raw={DDB_C} t={Z6} fill="#18e4ec" />
			<text x="1401" y="702" fontSize="12" fill="#cc2020">2865.00</text>
			<AxisText x={1887} tick={1870} items={[[622, "3100"], [691, "2913"], [760, "2725"], [829, "2537"]]} />
			<rect x="1870" y="705" width="50" height="15" fill="#b4e8ea" />
			<text x="1870" y="717" fontSize="12" fill="#444444">2828.1</text>
		</Pane>
		<Pane box={[1246, 842, 674, 143]} heightClass="h-[143px]" plotClass="w-[623px]" axisClass="border-2 border-[#c8c8c8]" titleClass="top-[0px]" title={<VolumeTitle volume="212029888.00" xg="-" ratio="0.75" />}>
			<VolBars raw={VD} t={Z8} x0={22} x1={1380} base={492} w={7} />
			<line x1="1249" x2="1326" y1="939.5" y2="939.5" stroke="#000090" shapeRendering="crispEdges" />
			<path d="M1336 935 1345 928M1336 935 1340 934M1336 935 1337 931" fill="none" stroke="#cc2020" />
			<text x="1347" y="937" fontSize="12" fill="#cc2020">多头</text>
			<AxisText x={1880} tick={1870} items={[[862, "60000"], [892, "45000"], [923, "30000"], [953, "15000"]]} />
			<UnitBox x={1870} y={971} label="X1万" />
		</Pane>
		<AxisRow
			plotClass="w-[623px]"
			unit="日线"
			items={[
				{ label: "2019年", w: "w-[62px]" },
				{ label: "2", w: "w-[128px]" },
				{ label: "3", w: "w-[30px]" },
				{ label: "2019/03/07/四", w: "w-[78px]", active: true },
				{ label: "", w: "w-[72px]" },
				{ label: "4", w: "w-[180px]" },
				{ label: "5", w: "w-[73px]" },
			]}
		/>
		<Toolbar heightClass="h-[19px]" extra />
	</div>
);

export default function App() {
	return (
		<div className="relative flex h-[1040px] w-[1920px] flex-col overflow-hidden bg-white font-['Liberation_Sans','Noto_Sans_CJK_SC',sans-serif] text-[12px]">
			<TopBar />
			<TabBar />
			<div className="flex h-[974px] shrink-0">
				<Column1 />
				<Column2 />
				<Column3 />
			</div>
			<StatusBar />
			<div className="absolute left-[1770px] top-[16px] origin-top scale-y-110 whitespace-nowrap text-[33px] font-bold leading-[36px] text-white [-webkit-text-stroke:1px_#777777] [text-shadow:1px_2px_3px_#555555]">
				股海明灯
			</div>
		</div>
	);
}
